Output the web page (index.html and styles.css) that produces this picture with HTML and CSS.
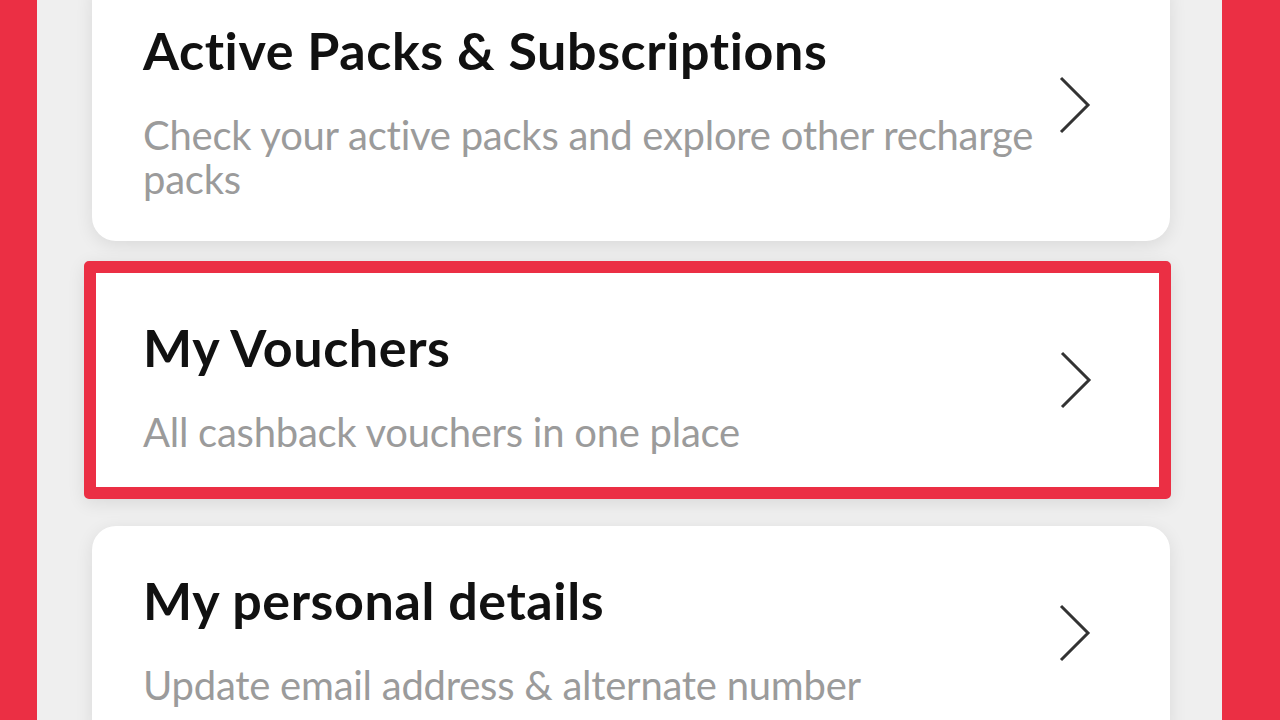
FILE: index.html
```html
<!DOCTYPE html>
<html lang="en">
<head>
<meta charset="utf-8">
<title>Account</title>
<link rel="stylesheet" href="styles.css">
</head>
<body>
  <div class="frame">
    <div class="edge edge-left"></div>
    <main class="screen">
      <div class="list">
        <section class="card card-first">
          <div class="card-text">
            <h2 class="card-title">Active Packs &amp; Subscriptions</h2>
            <p class="card-sub">Check your active packs and explore other recharge packs</p>
          </div>
          <svg class="chevron" viewBox="0 0 32 58" aria-hidden="true"><path d="M2 2 L29 29 L2 56"/></svg>
        </section>
        <section class="card card-marked">
          <div class="card-text">
            <h2 class="card-title">My Vouchers</h2>
            <p class="card-sub">All cashback vouchers in one place</p>
          </div>
          <svg class="chevron" viewBox="0 0 32 58" aria-hidden="true"><path d="M2 2 L29 29 L2 56"/></svg>
        </section>
        <section class="card card-last">
          <div class="card-text">
            <h2 class="card-title">My personal details</h2>
            <p class="card-sub">Update email address &amp; alternate number</p>
          </div>
          <svg class="chevron" viewBox="0 0 32 58" aria-hidden="true"><path d="M2 2 L29 29 L2 56"/></svg>
        </section>
      </div>
    </main>
    <div class="edge edge-right"></div>
  </div>
</body>
</html>
```
FILE: styles.css
```css
* { box-sizing: border-box; }
html, body {
  margin: 0;
  padding: 0;
  width: 1280px;
  height: 720px;
  overflow: hidden;
  font-family: "Lato", "Open Sans", sans-serif;
}
.frame {
  display: flex;
  width: 1280px;
  height: 720px;
}
.edge {
  background: #eb2f44;
  flex: none;
}
.edge-left { width: 37px; }
.edge-right { width: 58px; }
.screen {
  flex: 1;
  background: #efefef;
  padding: 0 52px 0 55px;
  overflow: hidden;
}
.list {
  display: flex;
  flex-direction: column;
  margin-top: -24px;
}
.card {
  display: flex;
  align-items: center;
  background: #fff;
  border-radius: 24px;
  padding: 44px 79px 40px 51px;
  box-shadow: 0 4px 18px rgba(0, 0, 0, 0.09);
}
.card-marked {
  margin: 20px -1px 0 -8px;
  border: 12px solid #eb2f44;
  border-radius: 5px;
  padding: 44px 67px 33px 47px;
}
.card-last { margin-top: 27px; }
.card-text {
  flex: 1;
  min-width: 0;
}
.card-title {
  margin: 0;
  font-size: 52px;
  line-height: 60px;
  font-weight: 700;
  letter-spacing: 0.6px;
  color: #111;
}
.card-sub {
  margin: 33px 0 0;
  font-size: 40px;
  line-height: 44px;
  font-weight: 400;
  letter-spacing: -0.25px;
  color: #9b9b9b;
}
.chevron {
  flex: none;
  width: 32px;
  height: 58px;
  margin: 0 0 12px 10px;
  fill: none;
  stroke: #333;
  stroke-width: 3;
}
```
